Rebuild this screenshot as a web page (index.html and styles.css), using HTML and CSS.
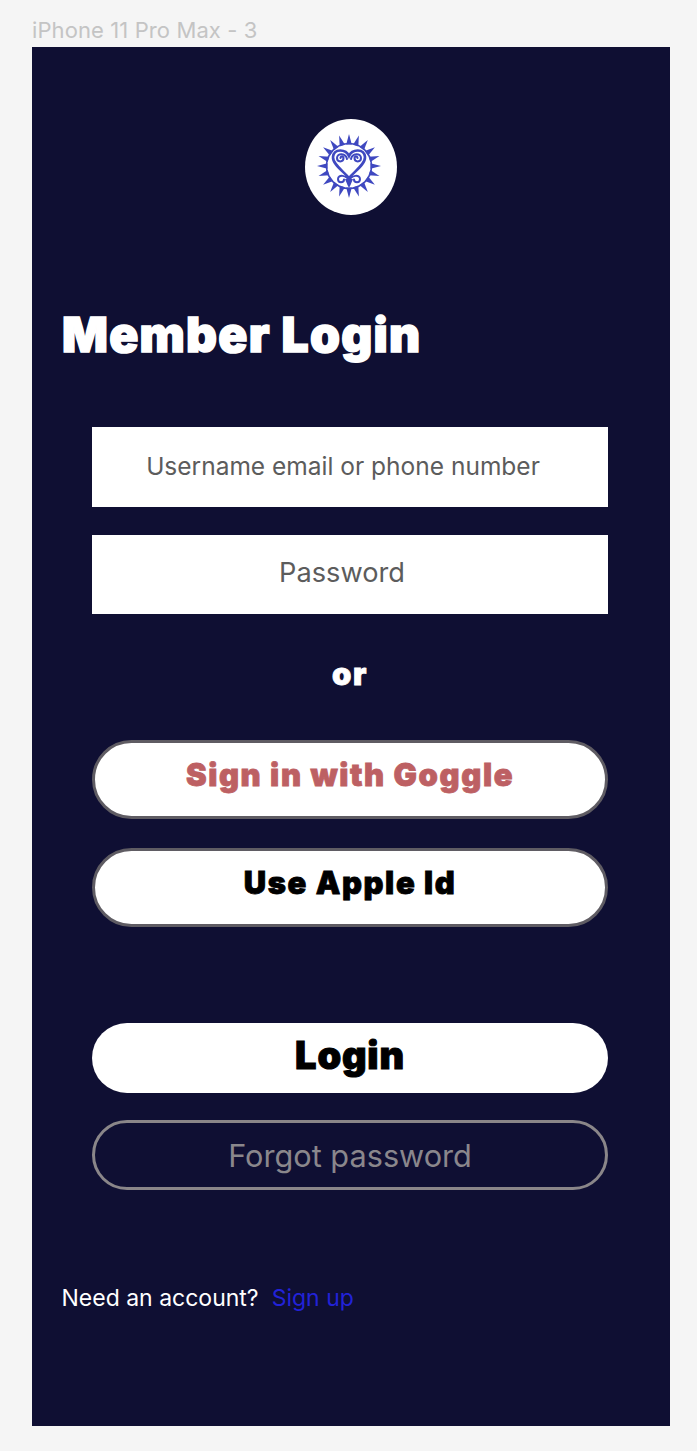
FILE: index.html
```html
<!DOCTYPE html>
<html lang="en">
<head>
<meta charset="utf-8">
<title>Member Login</title>
<link rel="stylesheet" href="styles.css">
</head>
<body>
<div class="frame-label">iPhone 11 Pro Max - 3</div>
<main class="frame">
  <div class="logo">
    <svg class="logo-svg" viewBox="-32 -32 64 64" width="64" height="64" aria-hidden="true">
      <defs><polygon id="ray" points="-2.800,-21.500 0,-32 2.800,-21.500"/></defs>
      <g class="rays">
        <use href="#ray" transform="rotate(0)"/><use href="#ray" transform="rotate(18)"/><use href="#ray" transform="rotate(36)"/><use href="#ray" transform="rotate(54)"/><use href="#ray" transform="rotate(72)"/><use href="#ray" transform="rotate(90)"/><use href="#ray" transform="rotate(108)"/><use href="#ray" transform="rotate(126)"/><use href="#ray" transform="rotate(144)"/><use href="#ray" transform="rotate(162)"/><use href="#ray" transform="rotate(180)"/><use href="#ray" transform="rotate(198)"/><use href="#ray" transform="rotate(216)"/><use href="#ray" transform="rotate(234)"/><use href="#ray" transform="rotate(252)"/><use href="#ray" transform="rotate(270)"/><use href="#ray" transform="rotate(288)"/><use href="#ray" transform="rotate(306)"/><use href="#ray" transform="rotate(324)"/><use href="#ray" transform="rotate(342)"/>
      </g>
      <circle class="ring" r="22.500"/>
      <path class="heart" d="M0 -10C-3 -17 -15 -18 -16 -9C-16.500 -2 -6 5 0 12C6 5 16.500 -2 16 -9C15 -18 3 -17 0 -10Z"/>
      <path class="curl" d="M-2 -7C-3 -13 -12 -13.500 -12 -8C-12 -3.500 -5.500 -3.500 -5.500 -8C-5.500 -10 -8.500 -10 -8.500 -8"/>
      <path class="curl" d="M2 -7C3 -13 12 -13.500 12 -8C12 -3.500 5.500 -3.500 5.500 -8C5.500 -10 8.500 -10 8.500 -8"/>
      <path class="curl" d="M0 15C-2 9 -11 8 -11 13C-11 17.500 -5 17 -5 13.500"/>
      <path class="curl" d="M0 15C2 9 11 8 11 13C11 17.500 5 17 5 13.500"/>
      <polygon class="tip" points="-4,13 4,13 1.500,19 0,22 -1.500,19"/>
    </svg>
  </div>
  <h1 class="title">Member Login</h1>
  <form class="form">
    <div class="field field-user">Username email or phone number</div>
    <div class="field field-pass">Password</div>
    <p class="or">or</p>
    <button type="button" class="pill pill-google">Sign in with Goggle</button>
    <button type="button" class="pill pill-apple">Use Apple Id</button>
    <button type="button" class="action action-login">Login</button>
    <button type="button" class="action action-forgot">Forgot password</button>
  </form>
  <p class="signup">Need an account?<a class="signup-link" href="#">Sign up</a></p>
</main>
</body>
</html>
```

FILE: styles.css
```css
* { box-sizing: border-box; }
html, body { margin: 0; padding: 0; }
body {
  width: 697px;
  height: 1451px;
  background: #f5f5f5;
  padding: 18px 27px 25px 32px;
  font-family: Inter, "Liberation Sans", sans-serif;
  overflow: hidden;
}
.frame-label {
  height: 29px;
  font-size: 22px;
  line-height: 25px;
  letter-spacing: 0.1px;
  color: #c4c4c4;
}
.frame {
  height: 1379px;
  background: #0f0f33;
  padding: 72px 30px 0;
  display: flex;
  flex-direction: column;
}
.logo {
  width: 92px;
  height: 96px;
  border-radius: 50%;
  background: #fff;
  align-self: center;
  display: flex;
  align-items: center;
  justify-content: center;
  padding: 0 5px 3px 0;
}
.logo-svg { flex: none; }
.rays { fill: #3f48c0; }
.ring { fill: none; stroke: #3f48c0; stroke-width: 1.6; }
.heart { fill: none; stroke: #3f48c0; stroke-width: 2.6; }
.curl { fill: none; stroke: #3f48c0; stroke-width: 2; stroke-linecap: round; }
.tip { fill: #3f48c0; }
.title {
  margin: 95px 0 0;
  height: 48px;
  font-family: Inter, sans-serif;
  font-weight: 900;
  font-size: 48px;
  line-height: 50px;
  letter-spacing: 1.25px;
  -webkit-text-stroke: 1.5px currentColor;
  color: #fff;
  white-space: nowrap;
}
.form {
  margin: 69px 0 0 30px;
  width: 516px;
  display: flex;
  flex-direction: column;
}
.field {
  height: 80px;
  background: #fff;
  color: #5c5c5c;
  font-size: 24.5px;
  display: flex;
  align-items: center;
  justify-content: center;
  padding-bottom: 3px;
}
.field-user { padding-right: 18px; padding-left: 4px; margin-bottom: 28px; }
.field-pass { height: 79px; font-size: 27.2px; padding-right: 16px; padding-bottom: 4px; }
.or {
  margin: 40px 0 0;
  height: 86px;
  text-align: center;
  font-weight: 900;
  font-size: 31px;
  line-height: 40px;
  letter-spacing: 1.5px;
  -webkit-text-stroke: 0.8px currentColor;
  color: #fff;
}
.pill {
  height: 79px;
  border: 3px solid #5f5c63;
  border-radius: 40px;
  background: #fff;
  font-family: Inter, sans-serif;
  font-weight: 900;
  font-size: 31px;
  letter-spacing: 1.6px;
  -webkit-text-stroke: 0.8px currentColor;
  padding: 0 0 10px;
}
.pill-google { color: #bd6063; margin-bottom: 29px; }
.pill-apple { color: #000; margin-bottom: 96px; }
.action {
  height: 70px;
  border-radius: 35px;
  padding: 0 0 3px;
}
.action-login {
  border: 0;
  background: #fff;
  color: #000;
  font-family: Inter, sans-serif;
  font-weight: 900;
  font-size: 38px;
  letter-spacing: 0.8px;
  -webkit-text-stroke: 1px currentColor;
  padding-bottom: 7px;
  margin-bottom: 27px;
}
.action-forgot {
  border: 3px solid #8a8689;
  background: transparent;
  color: #8a878c;
  font-family: Inter, sans-serif;
  font-weight: 400;
  font-size: 30.7px;
  padding: 0;
}
.signup {
  margin: 94px 0 0 -0.5px;
  font-size: 23px;
  line-height: 28px;
  color: #fff;
}
.signup-link {
  color: #2222d8;
  margin-left: 13px;
  text-decoration: none;
}
```
